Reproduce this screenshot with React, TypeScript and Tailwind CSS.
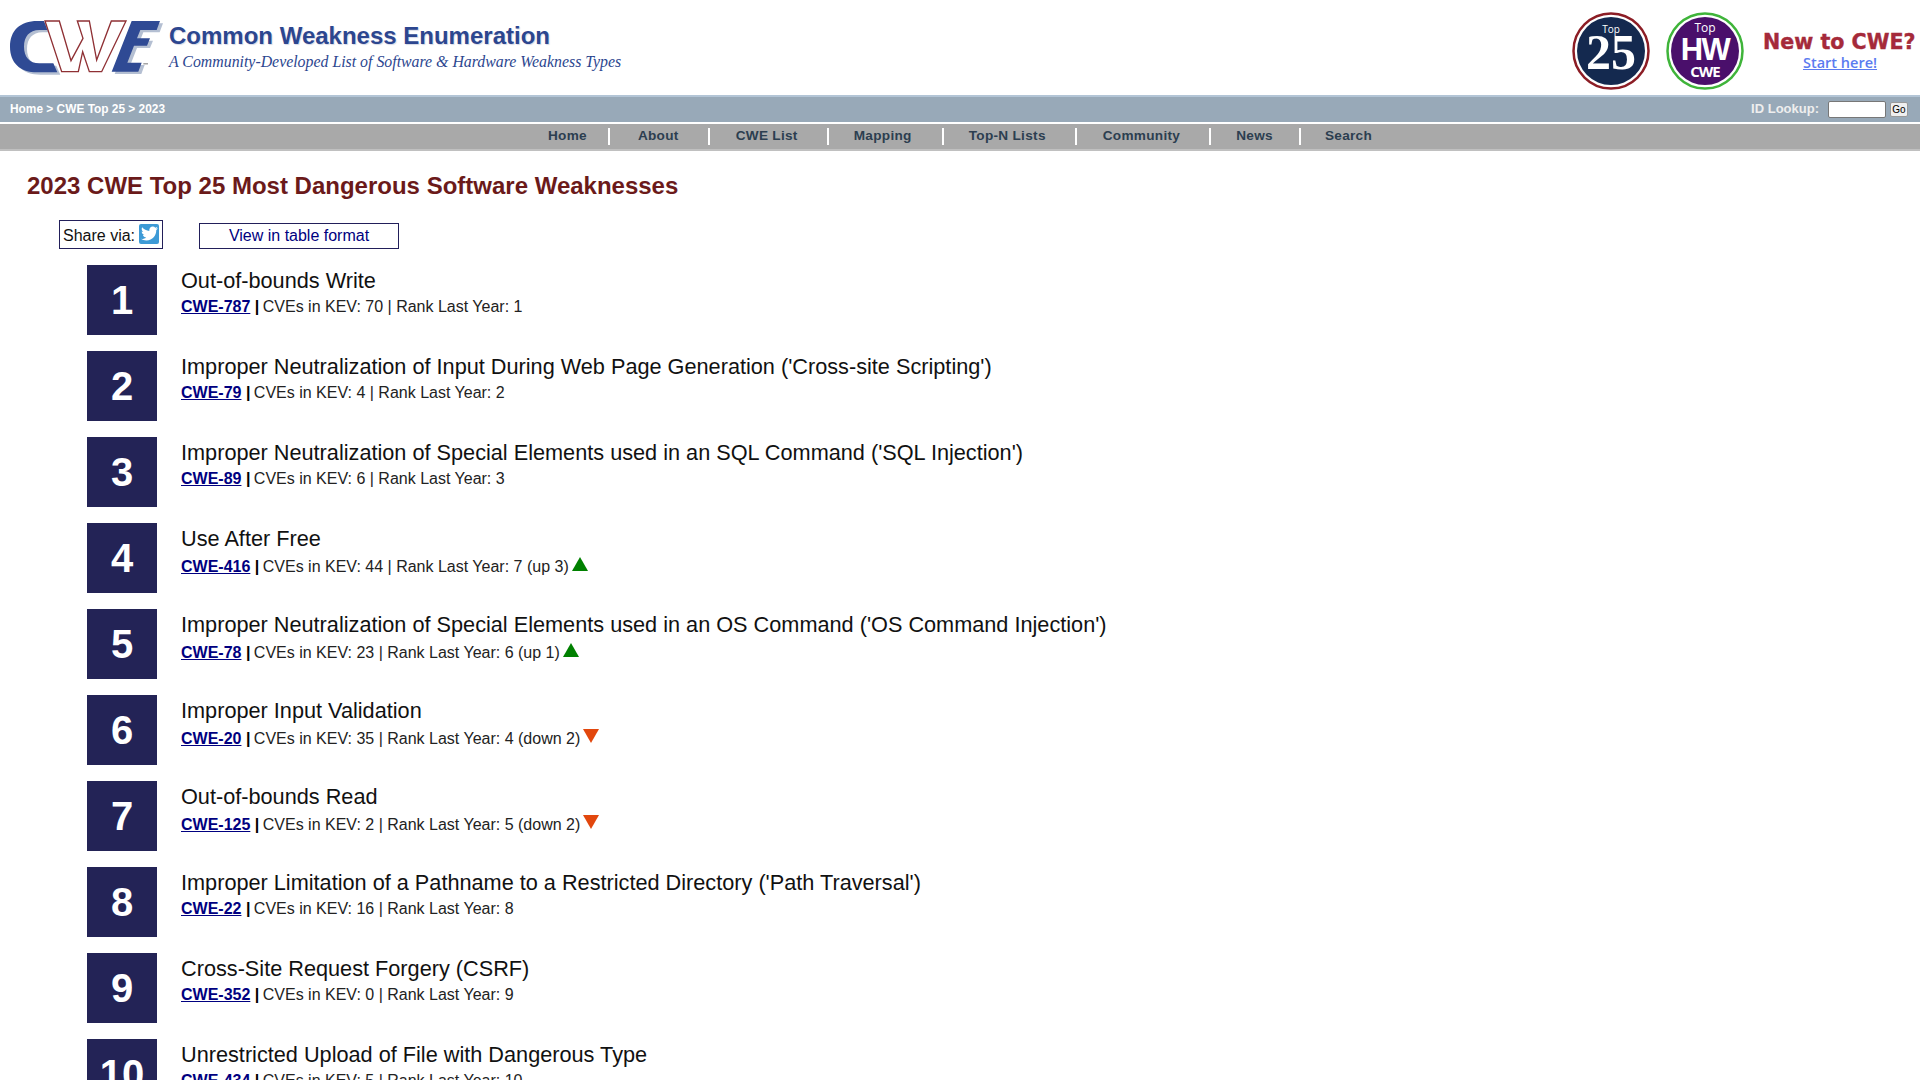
import React from "react";
import { FaTwitter } from "react-icons/fa";

interface Weakness {
  rank: number;
  title: string;
  id: string;
  kev: number;
  last: number;
  move?: "up" | "down";
  by?: number;
}

const weaknesses: Weakness[] = [
  { rank: 1, title: "Out-of-bounds Write", id: "CWE-787", kev: 70, last: 1 },
  { rank: 2, title: "Improper Neutralization of Input During Web Page Generation ('Cross-site Scripting')", id: "CWE-79", kev: 4, last: 2 },
  { rank: 3, title: "Improper Neutralization of Special Elements used in an SQL Command ('SQL Injection')", id: "CWE-89", kev: 6, last: 3 },
  { rank: 4, title: "Use After Free", id: "CWE-416", kev: 44, last: 7, move: "up", by: 3 },
  { rank: 5, title: "Improper Neutralization of Special Elements used in an OS Command ('OS Command Injection')", id: "CWE-78", kev: 23, last: 6, move: "up", by: 1 },
  { rank: 6, title: "Improper Input Validation", id: "CWE-20", kev: 35, last: 4, move: "down", by: 2 },
  { rank: 7, title: "Out-of-bounds Read", id: "CWE-125", kev: 2, last: 5, move: "down", by: 2 },
  { rank: 8, title: "Improper Limitation of a Pathname to a Restricted Directory ('Path Traversal')", id: "CWE-22", kev: 16, last: 8 },
  { rank: 9, title: "Cross-Site Request Forgery (CSRF)", id: "CWE-352", kev: 0, last: 9 },
  { rank: 10, title: "Unrestricted Upload of File with Dangerous Type", id: "CWE-434", kev: 5, last: 10 },
];

// the separators don't sit midway between the items, so each one has its own padding
const navItems = [
  { label: "Home", cls: "pr-[21px] border-r-2" },
  { label: "About", cls: "pl-[28px] pr-[29px] border-r-2" },
  { label: "CWE List", cls: "pl-[26px] pr-[29px] border-r-2" },
  { label: "Mapping", cls: "pl-[25px] pr-[30px] border-r-2" },
  { label: "Top-N Lists", cls: "pl-[25px] pr-[29px] border-r-2" },
  { label: "Community", cls: "pl-[26px] pr-[29px] border-r-2" },
  { label: "News", cls: "pl-[25px] pr-[26px] border-r-2" },
  { label: "Search", cls: "pl-[24px]" },
];

const CweLogo = () => (
  <svg width="170" height="70" viewBox="0 0 510 210" className="shrink-0">
    {/* shadow */}
    <g fill="#b4bfd2" transform="translate(9 7)">
      <path d="M132 33 H112 C60 33 30 62 30 110 C30 158 60 187 112 187 H172 L160 160 H118 C88 160 72 140 72 110 C72 80 88 60 118 60 H142 Z" />
      <path d="M395 33 H480 L470 60 H421 L411 85 H450 L441 107 H402 L382 158 H425 L415 185 H335 Z" />
    </g>
    {/* C */}
    <path fill="#2f4a94" d="M132 33 H112 C60 33 30 62 30 110 C30 158 60 187 112 187 H172 L160 160 H118 C88 160 72 140 72 110 C72 80 88 60 118 60 H142 Z" />
    {/* W */}
    <path fill="#ffffff" stroke="#8f3034" strokeWidth="4" strokeLinejoin="miter" d="M135 33 H178 L213 152 L249 85 L232 33 H268 L290 150 L334 33 H378 L305 185 H268 L248 125 L235 185 H185 Z" />
    {/* E */}
    <path fill="#2f4a94" d="M395 33 H480 L470 60 H421 L411 85 H450 L441 107 H402 L382 158 H425 L415 185 H335 Z" />
    <path fill="#777777" d="M430 160 H444 V163 H430 Z" />
  </svg>
);

const Top25Badge = () => (
  <svg width="78" height="78" viewBox="0 0 78 78">
    <circle cx="39" cy="39" r="37.5" fill="#ffffff" stroke="#8c1d25" strokeWidth="2.5" />
    <circle cx="39" cy="39" r="34" fill="#14294f" />
    <text x="39" y="21" textAnchor="middle" fill="#ffffff" fontSize="10" fontFamily="'Open Sans', sans-serif">Top</text>
    <text x="39" y="57" textAnchor="middle" fill="#ffffff" fontSize="50" fontWeight="700" fontFamily="'Liberation Serif', serif">25</text>
  </svg>
);

const HwBadge = () => (
  <svg width="78" height="78" viewBox="0 0 78 78">
    <circle cx="39" cy="39" r="37.5" fill="#ffffff" stroke="#3fb43a" strokeWidth="2.5" />
    <circle cx="39" cy="39" r="34" fill="#4a0f6b" />
    <text x="39" y="20" textAnchor="middle" fill="#ffffff" fontSize="12" fontFamily="'Open Sans', sans-serif">Top</text>
    <text x="39" y="48" textAnchor="middle" fill="#ffffff" fontSize="31" fontWeight="700" fontFamily="'Liberation Sans', sans-serif" letterSpacing="-1.5">HW</text>
    <text x="39" y="65" textAnchor="middle" fill="#ffffff" fontSize="15" fontWeight="700" fontFamily="'Open Sans', sans-serif" letterSpacing="-1">CWE</text>
  </svg>
);

const Triangle = ({ dir }: { dir: "up" | "down" }) => (
  <svg width="16" height="18" viewBox="0 0 16 18" className="ml-[3px] inline-block align-baseline">
    {dir === "up" ? (
      <polygon points="8,3 16,17 0,17" fill="#008000" />
    ) : (
      <polygon points="0,3 16,3 8,17" fill="#e2470d" />
    )}
  </svg>
);

const WeaknessRow = ({ item }: { item: Weakness }) => (
  <div className="flex h-[70px] gap-6 mb-4">
    <div className="w-[70px] h-[70px] shrink-0 flex items-center justify-center bg-[#232356] text-white text-[40px] font-bold">
      {item.rank}
    </div>
    <div className="pt-[1px]">
      <div className="text-[21.7px] leading-[30px] text-[#111111]">{item.title}</div>
      <div className="text-[16px] leading-[22px] text-[#222222]">
        <a href="#" className="font-bold underline text-[#000080]">{item.id}</a>
        <b className="text-black mr-[-1px]"> | </b>
        CVEs in KEV: {item.kev} | Rank Last Year: {item.last}
        {item.move && ` (${item.move} ${item.by})`}
        {item.move && <Triangle dir={item.move} />}
      </div>
    </div>
  </div>
);

export default function App() {
  return (
    <div className="h-[1080px] overflow-hidden bg-white font-['Liberation_Sans',Arial,sans-serif]">
      {/* Header */}
      <header className="h-[95px] flex items-start">
        <div className="mt-[10px]">
          <CweLogo />
        </div>
        <div className="ml-[-1px] mt-[21px]">
          <div className="text-[24px] leading-[30px] font-bold text-[#2c468f] [text-shadow:1px_1px_1px_#d5d9e6]">
            Common Weakness Enumeration
          </div>
          <div className="text-[15.85px] leading-[20px] mt-[1px] italic font-['Liberation_Serif',serif] text-[#2c468f]">
            A Community-Developed List of Software &amp; Hardware Weakness Types
          </div>
        </div>
        <div className="ml-auto flex items-start pt-[12px]">
          <Top25Badge />
          <div className="ml-[16px]">
            <HwBadge />
          </div>
          <div className="ml-[19px] mr-[5px] w-[152px] pt-[18px] text-center">
            <div className="text-[20.6px] leading-[24px] font-bold font-['DejaVu_Sans',sans-serif] text-[#a52a3a] [-webkit-text-stroke:0.4px_#a52a3a] whitespace-nowrap">
              New to CWE?
            </div>
            <a href="#" className="block ml-[2px] text-[14.5px] leading-[18px] font-semibold underline font-['Open_Sans',sans-serif] text-[#5b7bf0]">
              Start here!
            </a>
          </div>
        </div>
      </header>

      {/* Breadcrumb bar */}
      <div className="h-[27px] bg-[#98a9b8] border-t-2 border-[#b3c5d6] flex items-center justify-between pl-[10px] pr-[12px]">
        <div className="mt-[1px] text-[11.9px] font-bold text-white">Home &gt; CWE Top 25 &gt; 2023</div>
        <div className="flex items-center">
          <span className="text-[13px] font-bold text-[#eeeeee] mt-[-1px]">ID Lookup:</span>
          <input className="ml-[9px] w-[58px] h-[17px] bg-white border border-[#777777] rounded-[2px]" />
          <button className="ml-[4px] w-[18px] h-[15px] flex items-center justify-center bg-[#efefef] border border-[#999999] rounded-[2px] text-[10px] text-black">
            Go
          </button>
        </div>
      </div>

      {/* Nav */}
      <nav className="mt-[2px] h-[27px] bg-[#a9a9a9] border-b-2 border-[#c0c0c0] flex justify-center items-center">
        {navItems.map((item) => (
          <a
            key={item.label}
            href="#"
            className={`h-[17px] flex items-center border-white text-[13.6px] font-bold text-[#2c3e50] tracking-[0.3px] ${item.cls}`}
          >
            {item.label}
          </a>
        ))}
      </nav>

      <main className="pl-[27px]">
        <h1 className="mt-[20px] text-[24px] leading-[30px] font-bold text-[#6b1a1a]">
          2023 CWE Top 25 Most Dangerous Software Weaknesses
        </h1>

        <div className="mt-[19px] ml-[32px] flex items-end">
          <div className="w-[104px] h-[29px] flex items-center border border-[#221f5a] pl-[3px] pt-[2px] text-[16px] text-[#111111]">
            Share via:
            <span className="ml-[4px] mt-[-4px] w-[20px] h-[20px] rounded-[2px] bg-[#3d9ad6] flex items-center justify-center text-white">
              <FaTwitter size={17} />
            </span>
          </div>
          <a href="#" className="ml-[36px] w-[200px] h-[26px] flex items-center justify-center border border-[#221f5a] text-[16px] text-[#000080]">
            View in table format
          </a>
        </div>

        <div className="mt-[16px] ml-[60px]">
          {weaknesses.map((item) => (
            <WeaknessRow key={item.rank} item={item} />
          ))}
        </div>
      </main>
    </div>
  );
}
